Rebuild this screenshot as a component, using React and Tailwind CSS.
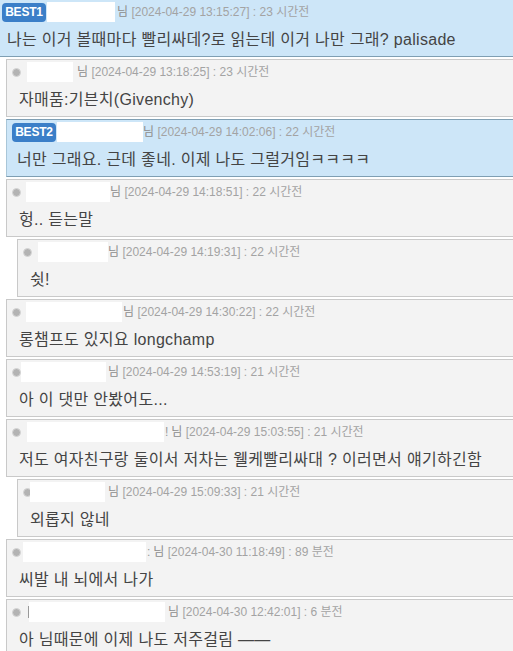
import React from 'react';

const comments = [
  { best: 'BEST1', left: 'first', nameW: 68, gap: 2, date: '2024-04-29 13:15:27', ago: '23 시간전', text: '나는 이거 볼때마다 빨리싸데?로 읽는데 이거 나만 그래? palisade' },
  { indent: 'c', nameMl: 6, nameW: 46, gap: 4, date: '2024-04-29 13:18:25', ago: '23 시간전', text: '자매품:기븐치(Givenchy)' },
  { best: 'BEST2', indent: 'c', nameW: 86, gap: 0, date: '2024-04-29 14:02:06', ago: '22 시간전', text: '너만 그래요. 근데 좋네. 이제 나도 그럴거임ㅋㅋㅋㅋ' },
  { indent: 'c', nameMl: 5, nameW: 84, gap: 0, date: '2024-04-29 14:18:51', ago: '22 시간전', text: '헝.. 듣는말' },
  { indent: 'r', nameMl: 6, nameW: 70, gap: 0, date: '2024-04-29 14:19:31', ago: '22 시간전', text: '쉿!' },
  { indent: 'c', nameMl: 5, nameW: 96, gap: 1, date: '2024-04-29 14:30:22', ago: '22 시간전', text: '롱챔프도 있지요 longchamp' },
  { indent: 'c', nameMl: 0, nameW: 85, gap: 2, date: '2024-04-29 14:53:19', ago: '21 시간전', text: '아 이 댓만 안봤어도...' },
  { indent: 'c', nameMl: 6, nameW: 137, pre: '!', gap: 1, date: '2024-04-29 15:03:55', ago: '21 시간전', text: '저도 여자친구랑 둘이서 저차는 웰케빨리싸대 ? 이러면서 얘기하긴함' },
  { indent: 'r', nameMl: -2, nameW: 75, gap: 3, date: '2024-04-29 15:09:33', ago: '21 시간전', text: '외롭지 않네' },
  { indent: 'c', nameMl: 2, nameW: 123, pre: ':', gap: 1, date: '2024-04-30 11:18:49', ago: '89 분전', text: '씨발 내 뇌에서 나가' },
  { indent: 'c', nameMl: 8, nameW: 136, bar: true, gap: 3, date: '2024-04-30 12:42:01', ago: '6 분전', text: '아 님때문에 이제 나도 저주걸림 ——' },
];

function Meta({ c }) {
  return (
    <span className="text-[12px] text-[#a3a3a3] whitespace-nowrap" style={{ marginLeft: c.gap }}>
      {c.pre && <span className="text-[#999] mr-[3px]">{c.pre}</span>}
      <span className="text-[#8c8c8c]">님</span> [{c.date}] : {c.ago}
    </span>
  );
}

function Comment({ c }) {
  const isBest = !!c.best;
  const box = isBest
    ? 'bg-[#cde6f8] border-y border-[#7f9fb3]'
    : 'bg-[#f3f3f3] border-y border-[#c9c9c9]';
  const indent =
    c.left === 'first' ? 'ml-0 pl-[2px]' : c.indent === 'r' ? 'ml-[17px] border-l pl-[5px]' : 'ml-[6px] border-l pl-[5px]';
  const leftColor = isBest ? 'border-l-[#a9c6d8]' : 'border-l-[#c9c9c9]';

  return (
    <div className={`h-[58px] pt-[2px] ${box} ${indent} ${c.left === 'first' ? '' : leftColor}`}>
      <div className="flex items-center h-[20px]">
        {isBest ? (
          <span className="h-[19px] w-[44px] rounded-[4px] bg-[#3b7fc8] text-white text-[12px] font-bold leading-[19px] text-center tracking-[-0.2px]">
            {c.best}
          </span>
        ) : (
          <span className="w-[9px] h-[9px] rounded-full bg-[#b3b3b3] border border-[#d6d6d6] shrink-0" />
        )}
        {c.bar && <span className="ml-[7px] w-px h-[12px] bg-[#999]" />}
        <span
          className="h-[20px] bg-white shrink-0"
          style={{ width: c.nameW, marginLeft: isBest ? 1 : c.bar ? 0 : c.nameMl }}
        />
        <Meta c={c} />
      </div>
      <div className={`mt-[7px] leading-[22px] text-[16px] text-[#444] tracking-[0.3px] whitespace-nowrap ${isBest ? 'pl-[5px]' : 'pl-[7px]'}`}>
        {c.text}
      </div>
    </div>
  );
}

export default function App() {
  return (
    <div
      className="w-[513px] h-[651px] overflow-hidden bg-white"
      style={{ fontFamily: '"Liberation Sans", "Noto Sans CJK KR", sans-serif' }}
    >
      <div className="-mt-px flex flex-col gap-[2px]">
        {comments.map((c, i) => (
          <Comment key={i} c={c} />
        ))}
      </div>
    </div>
  );
}
